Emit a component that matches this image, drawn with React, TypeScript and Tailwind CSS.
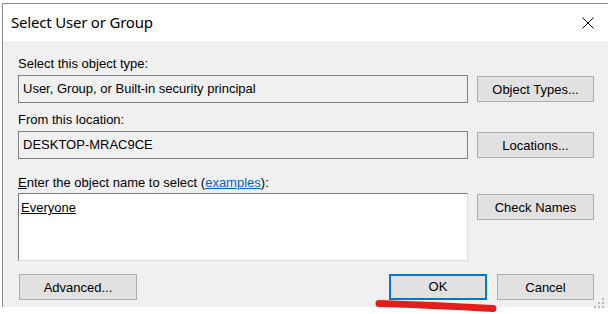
import React from "react";

const btn =
  "flex items-center justify-center h-[26px] bg-[#e1e1e1] border border-[#adadad] text-[13px] text-black leading-none";

export default function App() {
  return (
    <div
      className="relative w-[608px] h-[314px] bg-white overflow-hidden"
      style={{ fontFamily: '"Liberation Sans", Arial, sans-serif' }}
    >
      <div className="absolute left-[2px] top-[3px] w-[620px] h-[304px] border-l border-t border-[#8c8c8c] flex flex-col">
        {/* Title bar */}
        <div className="h-[37px] bg-white flex items-center justify-between pl-[8px] pr-[13px] shrink-0">
          <span
            className="text-[15px] text-black tracking-[-0.2px]"
            style={{ fontFamily: '"Noto Sans", "Open Sans", sans-serif' }}
          >
            Select User or Group
          </span>
          <svg width="12" height="12" viewBox="0 0 12 12" className="mr-[15px]">
            <path d="M0.5 0.5 L11.5 11.5 M11.5 0.5 L0.5 11.5" stroke="#000" strokeWidth="1" />
          </svg>
        </div>
        {/* Client */}
        <div className="flex-1 bg-[#f0f0f0] pl-[15px] pt-[15px] flex flex-col">
          <div className="h-[16px] leading-[16px] text-[13px] text-black">Select this object type:</div>
          <div className="mt-[3px] flex items-center gap-[9px]">
            <div className="w-[450px] h-[28px] border border-[#828282] bg-[#f0f0f0] flex items-center pl-[4px] text-[13px] text-black">
              User, Group, or Built-in security principal
            </div>
            <div className={btn + " w-[117px]"}>Object Types...</div>
          </div>
          <div className="mt-[9px] h-[16px] leading-[16px] text-[13px] text-black">From this location:</div>
          <div className="mt-[3px] flex items-center gap-[9px]">
            <div className="w-[450px] h-[28px] border border-[#828282] bg-[#f0f0f0] flex items-center pl-[4px] text-[13px] text-black">
              DESKTOP-MRAC9CE
            </div>
            <div className={btn + " w-[117px]"}>Locations...</div>
          </div>
          <div className="mt-[16px] h-[16px] leading-[16px] text-[13px] text-black">
            <span className="underline">E</span>nter the object name to select (
            <span className="text-[#0066cc] underline">examples</span>):
          </div>
          <div className="mt-[2px] flex items-start gap-[9px]">
            <div className="w-[450px] h-[68px] bg-white border-t border-l border-[#7a7a7a] border-r border-b border-r-[#dcdcdc] border-b-[#dcdcdc] pl-[2px] pt-[6px] text-[13px] leading-[16px] text-black">
              <span className="underline">Everyone</span>
            </div>
            <div className={btn + " w-[117px] mt-[1px] h-[25px]"}>Check Names</div>
          </div>
          <div className="mt-[13px] flex items-center">
            <div className={btn + " w-[118px] ml-[1px]"}>Advanced...</div>
            <div className="w-[252px]" />
            <div className="w-[98px] h-[26px] bg-[#e1e1e1] border-2 border-[#0078d7] flex items-center justify-center text-[13px] text-black">
              OK
            </div>
            <div className={btn + " w-[97px] ml-[10px]"}>Cancel</div>
          </div>
        </div>
      </div>
      {/* resize grip */}
      <svg className="absolute left-[594px] top-[298px]" width="12" height="10" viewBox="0 0 12 10">
        <rect x="8" y="0" width="2" height="2" fill="#b8b8b8" />
        <rect x="4" y="4" width="2" height="2" fill="#b8b8b8" />
        <rect x="8" y="4" width="2" height="2" fill="#b8b8b8" />
        <rect x="0" y="8" width="2" height="2" fill="#b8b8b8" />
        <rect x="4" y="8" width="2" height="2" fill="#b8b8b8" />
        <rect x="8" y="8" width="2" height="2" fill="#b8b8b8" />
      </svg>
      {/* red marker stroke */}
      <svg className="absolute left-0 top-0 pointer-events-none" width="608" height="314">
        <path
          d="M379 303.5 Q 430 305 493 308.5"
          stroke="#e31c1c"
          strokeWidth="7"
          strokeLinecap="round"
          fill="none"
        />
      </svg>
    </div>
  );
}
